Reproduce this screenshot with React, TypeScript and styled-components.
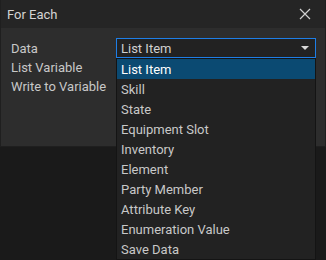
import React from "react";
import styled, { createGlobalStyle } from "styled-components";

const Global = createGlobalStyle`
  html, body { margin: 0; padding: 0; background: #1a1a1a; min-height: 260px; }
  body { font-family: Roboto, "Noto Sans", sans-serif; }
  #root { min-height: 260px; }
`;

const Dialog = styled.div`
  position: relative;
  width: 326px;
  height: 147px;
  box-sizing: border-box;
  border-left: 1px solid #1f1f1f;
  border-right: 1px solid #1f1f1f;
  border-bottom: 1px solid #1f1f1f;
  background: #2d2d2d;
  display: flex;
  flex-direction: column;
`;

const Header = styled.div`
  height: 28px;
  flex: none;
  background: #252525;
  display: flex;
  align-items: center;
  justify-content: space-between;
  padding: 0 14px 0 6px;
  color: #d4d4d4;
  font-size: 13px;
`;

const Close = styled.span`
  display: flex;
  width: 12px;
  height: 12px;
`;

const Body = styled.div`
  padding: 10px 10px 0 10px;
  display: grid;
  grid-template-columns: 105px 200px;
  grid-auto-rows: 19px;
  color: #c8c8c8;
  font-size: 13px;
`;

const Label = styled.div<{ $shift?: number }>`
  display: flex;
  align-items: center;
  height: 19px;
  padding-top: ${(p) => p.$shift ?? 1}px;
  box-sizing: border-box;
`;

const Select = styled.div`
  position: relative;
  height: 20px;
  box-sizing: border-box;
  border: 1px solid #1e7ee6;
  background: #222222;
  display: flex;
  align-items: center;
  justify-content: space-between;
  padding: 0 6px 0 4px;
  color: #d0d0d0;
  z-index: 5;
`;

const Arrow = styled.span`
  width: 0;
  height: 0;
  border-left: 4px solid transparent;
  border-right: 4px solid transparent;
  border-top: 4px solid #d8d8d8;
`;

const Menu = styled.div`
  position: absolute;
  left: -1px;
  top: 19px;
  width: 200px;
  box-sizing: border-box;
  background: #222222;
  border: 1px solid #141414;
  z-index: 10;
`;

const Item = styled.div<{ $active?: boolean }>`
  height: 20px;
  display: flex;
  align-items: center;
  padding-left: 4px;
  font-size: 13px;
  color: ${(p) => (p.$active ? "#ffffff" : "#c8c8c8")};
  background: ${(p) => (p.$active ? "#0b4a72" : "transparent")};
`;

const items = [
  "List Item",
  "Skill",
  "State",
  "Equipment Slot",
  "Inventory",
  "Element",
  "Party Member",
  "Attribute Key",
  "Enumeration Value",
  "Save Data",
];

export default function App() {
  return (
    <>
      <Global />
      <Dialog>
        <Header>
          <span>For Each</span>
          <Close>
            <svg width="12" height="12" viewBox="0 0 12 12">
              <path d="M1 1L11 11M11 1L1 11" stroke="#d0d0d0" strokeWidth="1.2" />
            </svg>
          </Close>
        </Header>
        <Body>
          <Label>Data</Label>
          <Select>
            <span>List Item</span>
            <Arrow />
            <Menu>
              {items.map((t, i) => (
                <Item key={t} $active={i === 0}>
                  {t}
                </Item>
              ))}
            </Menu>
          </Select>
          <Label $shift={2}>List Variable</Label>
          <div />
          <Label $shift={2}>Write to Variable</Label>
          <div />
        </Body>
      </Dialog>
    </>
  );
}
